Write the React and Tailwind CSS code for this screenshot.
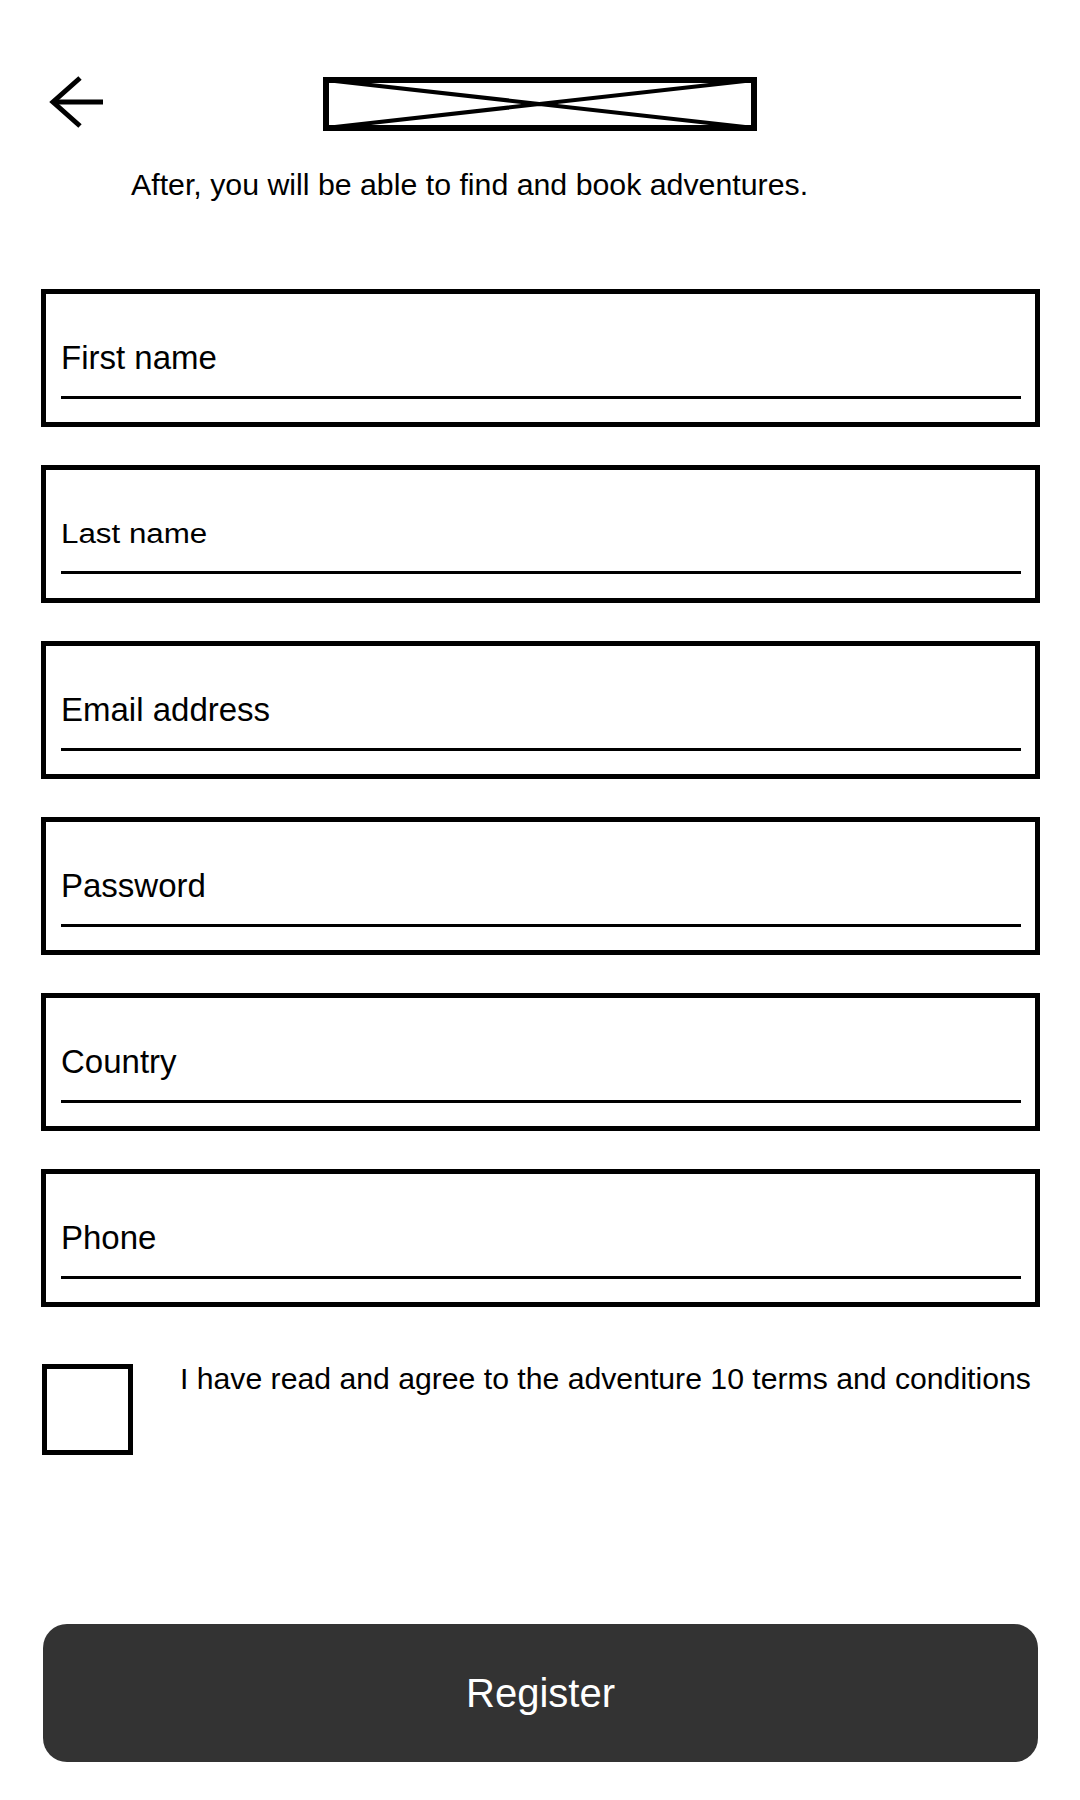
import { useState } from 'react'

function BackArrow() {
  return (
    <svg width="56" height="52" viewBox="0 0 56 52" fill="none">
      <path d="M54 26 H4" stroke="#000" strokeWidth="5" />
      <path d="M31 2 L4 26 L31 50" stroke="#000" strokeWidth="5" />
    </svg>
  )
}

function LogoPlaceholder() {
  return (
    <svg width="434" height="54" viewBox="0 0 434 54" fill="none">
      <rect x="3" y="3" width="428" height="48" stroke="#000" strokeWidth="6" />
      <path d="M3 3 L431 51 M3 51 L431 3" stroke="#000" strokeWidth="4" />
    </svg>
  )
}

function Field({ label, small }) {
  return (
    <div className="h-[138px] w-[999px] border-[5px] border-black flex flex-col pl-[15px] pr-[14px]">
      {small ? (
        <div className="pt-[51px] h-[78px] text-[27px] leading-[27px] text-black">
          <span className="inline-block origin-left scale-x-[1.16]">{label}</span>
        </div>
      ) : (
        <div className="pt-[48px] h-[79px] text-[33px] leading-[31px] text-black">{label}</div>
      )}
      <div className="mt-[23px] h-[3px] bg-black" />
    </div>
  )
}

export default function App() {
  const [agreed, setAgreed] = useState(false)

  const fields = [
    { label: 'First name' },
    { label: 'Last name', small: true },
    { label: 'Email address' },
    { label: 'Password' },
    { label: 'Country' },
    { label: 'Phone' }
  ]

  return (
    <div className="w-[1080px] h-[1800px] bg-white" style={{ fontFamily: '"Liberation Sans", Arial, sans-serif' }}>
      {/* Header */}
      <div className="pt-[76px] grid grid-cols-[1fr_auto_1fr] items-start">
        <div className="pl-[49px]">
          <BackArrow />
        </div>
        <div className="pt-px">
          <LogoPlaceholder />
        </div>
        <div />
      </div>

      <p className="mt-[39px] pl-[131px] text-[30.3px] leading-[30px] text-black">
        After, you will be able to find and book adventures.
      </p>

      {/* Form fields */}
      <div className="mt-[89px] pl-[41px] flex flex-col gap-[38px]">
        {fields.map((f) => (
          <Field key={f.label} label={f.label} small={f.small} />
        ))}
      </div>

      {/* Terms */}
      <div className="mt-[57px] pl-[42px] flex items-start gap-[47px]">
        <button
          onClick={() => setAgreed(!agreed)}
          className="w-[91px] h-[91px] shrink-0 border-[5px] border-black bg-white"
        />
        <p className="text-[30.2px] leading-[30px] text-black whitespace-nowrap">
          I have read and agree to the adventure 10 terms and conditions
        </p>
      </div>

      {/* Register */}
      <div className="mt-[169px] pl-[43px]">
        <button className="w-[995px] h-[138px] rounded-[24px] bg-[#333333] text-white text-[40px] leading-[40px] flex items-center justify-center">
          Register
        </button>
      </div>
    </div>
  )
}
